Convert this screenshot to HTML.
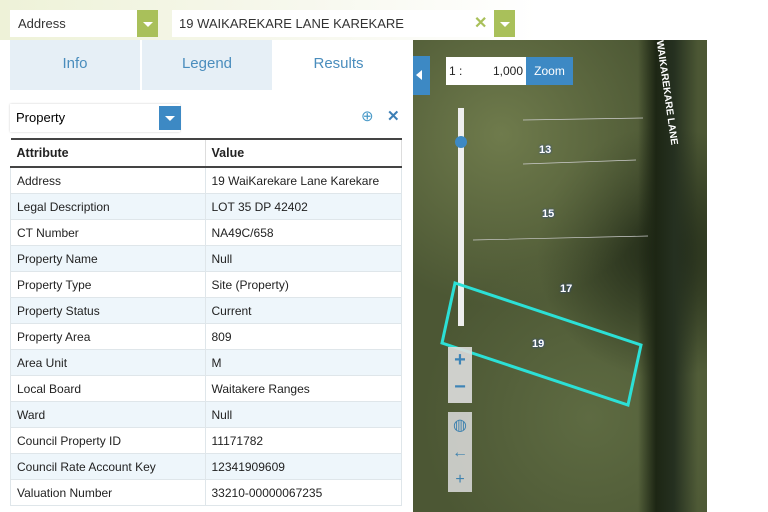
<!DOCTYPE html><html><head><style>
body{margin:0;width:768px;height:512px;overflow:hidden;background:#fff;font-family:"Liberation Sans",sans-serif;position:relative}
.top{position:absolute;left:0;top:0;width:768px;height:40px;background:linear-gradient(90deg,#eef2d8,#f7f8ee 40%,#fff 70%)}
.sel{position:absolute;top:10px;height:27px;background:#fff;font-size:13px;line-height:27px;color:#333}
.dd{position:absolute;top:10px;width:21px;height:27px;background:#a9c05a}
.dd:after{content:"";position:absolute;left:6px;top:12px;border:5px solid transparent;border-top:5px solid #fff}
.tabs{position:absolute;left:10px;top:40px;width:393px;height:50px}
.tab{position:absolute;top:0;height:50px;line-height:48px;text-align:center;font-size:15px;color:#4a8dbd}
table{position:absolute;left:10px;top:138px;width:392px;border-collapse:collapse;font-size:12px;color:#222}
td{height:25px;border:1px solid #dfe6ea;padding:0 6px}
tr:nth-child(odd) td{background:#eef6fb}
th{height:26px;text-align:left;padding:0 6px;font-size:12.5px;border-top:2px solid #444;border-bottom:2px solid #444;border-right:1px solid #ddd}
.map{position:absolute;left:413px;top:40px;width:294px;height:472px;background:radial-gradient(circle at 30% 20%,#6f7b4c,transparent 40%),radial-gradient(circle at 85% 45%,#222b18,transparent 35%),radial-gradient(circle at 60% 80%,#5e6b42,transparent 40%),#4c5734;overflow:hidden}
.n{position:absolute;color:#fff;font-size:11px;font-weight:bold;text-shadow:0 0 2px #24a}
</style></head><body>
<div class="top"></div>
<div class="sel" style="left:10px;width:128px;padding-left:8px">Address</div>
<div class="dd" style="left:137px"></div>
<div class="sel" style="left:172px;width:320px;padding-left:7px">19 WAIKAREKARE LANE KAREKARE</div>
<div style="position:absolute;left:474px;top:13px;color:#a9c05a;font-size:16px;font-weight:bold">✕</div>
<div class="dd" style="left:494px"></div>
<div class="tabs">
<div class="tab" style="left:0;width:130px;background:#e6eff6">Info</div>
<div class="tab" style="left:132px;width:130px;background:#e6eff6">Legend</div>
<div class="tab" style="left:264px;width:129px;background:#fff">Results</div>
</div>
<div style="position:absolute;left:10px;top:104px;width:170px;height:28px;background:#fff;box-shadow:0 0 2px #ccc;font-size:13px;line-height:28px;padding-left:6px;box-sizing:border-box">Property</div>
<div style="position:absolute;left:159px;top:106px;width:22px;height:24px;background:#3d89c4"><div style="position:absolute;left:6px;top:10px;border:5px solid transparent;border-top:5px solid #fff"></div></div>
<div style="position:absolute;left:361px;top:107px;color:#4a9ac8;font-size:15px">⊕</div>
<div style="position:absolute;left:387px;top:107px;color:#3d7fb5;font-size:15px;font-weight:bold">✕</div>
<table>
<tr><th style="width:182px">Attribute</th><th>Value</th></tr>
<tr><td>Address</td><td>19 WaiKarekare Lane Karekare</td></tr>
<tr><td>Legal Description</td><td>LOT 35 DP 42402</td></tr>
<tr><td>CT Number</td><td>NA49C/658</td></tr>
<tr><td>Property Name</td><td>Null</td></tr>
<tr><td>Property Type</td><td>Site (Property)</td></tr>
<tr><td>Property Status</td><td>Current</td></tr>
<tr><td>Property Area</td><td>809</td></tr>
<tr><td>Area Unit</td><td>M</td></tr>
<tr><td>Local Board</td><td>Waitakere Ranges</td></tr>
<tr><td>Ward</td><td>Null</td></tr>
<tr><td>Council Property ID</td><td>11171782</td></tr>
<tr><td>Council Rate Account Key</td><td>12341909609</td></tr>
<tr><td>Valuation Number</td><td>33210-00000067235</td></tr>
</table>
<div class="map">
<div style="position:absolute;left:225px;top:0;width:60px;height:472px;background:linear-gradient(90deg,transparent,#1d2614 30%,#253020 60%,transparent)"></div>
<div style="position:absolute;left:248px;top:0;color:#fff;font-size:10px;font-weight:bold;writing-mode:vertical-rl;transform:rotate(-8deg);letter-spacing:0">WAIKAREKARE LANE</div>
<div style="position:absolute;left:0;top:16px;width:17px;height:39px;background:#3d89c4"><div style="position:absolute;left:3px;top:14px;border:5px solid transparent;border-right:6px solid #fff;border-left:0"></div></div>
<div style="position:absolute;left:33px;top:17px;width:80px;height:28px;background:#fff;font-size:12px;line-height:28px;color:#222"><span style="padding-left:3px">1 :</span><span style="position:absolute;right:3px">1,000</span></div>
<div style="position:absolute;left:113px;top:17px;width:47px;height:28px;background:#3d89c4;color:#fff;font-size:12px;line-height:28px;text-align:center">Zoom</div>
<div style="position:absolute;left:45px;top:68px;width:6px;height:218px;background:#eee"></div>
<div style="position:absolute;left:42px;top:96px;width:12px;height:12px;border-radius:50%;background:#3d89c4"></div>
<div class="n" style="left:126px;top:104px">13</div>
<div class="n" style="left:129px;top:168px">15</div>
<div class="n" style="left:147px;top:243px">17</div>
<div class="n" style="left:119px;top:298px">19</div>
<svg style="position:absolute;left:0;top:0" width="294" height="472"><path d="M60,200 L235,196 M110,124 L223,120 M110,80 L230,78" stroke="#ccc" stroke-width=".7" fill="none"/><polygon points="42,243 228,305 215,365 29,303" fill="none" stroke="#2ce0d6" stroke-width="3"/></svg>
<div style="position:absolute;left:35px;top:307px;width:24px;height:56px;background:#ddd;opacity:.9;color:#3d89c4;font-size:20px;font-weight:bold;text-align:center;line-height:27px">+<br>−</div>
<div style="position:absolute;left:35px;top:372px;width:24px;height:80px;background:#ddd;opacity:.85;color:#3d89c4;font-size:16px;text-align:center;line-height:27px">◍<br>←<br>+</div>
</div>
</body></html>
